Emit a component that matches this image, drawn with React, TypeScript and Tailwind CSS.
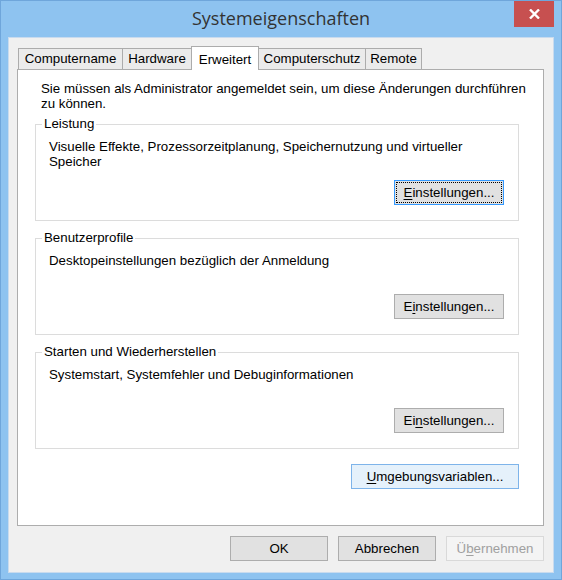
import type { ReactNode } from "react";

type ButtonKind = "normal" | "default" | "hot" | "disabled";

const buttonKinds: Record<ButtonKind, string> = {
  normal: "border-[#adadad] bg-[#e1e1e1] text-black",
  default:
    "border-[#3399ff] bg-[#e1e1e1] text-black outline-1 outline-dotted outline-black outline-offset-[-3px]",
  hot: "border-[#7eb4ea] bg-[#e5f1fb] text-black",
  disabled: "border-[#d9d9d9] bg-[#f4f4f4] text-[#a0a0a0]",
};

function WinButton({
  kind = "normal",
  className = "",
  children,
}: {
  kind?: ButtonKind;
  className?: string;
  children: ReactNode;
}) {
  return (
    <button
      type="button"
      disabled={kind === "disabled"}
      className={`flex h-[25px] shrink-0 items-center justify-center border leading-[15px] ${buttonKinds[kind]} ${className}`}
    >
      {children}
    </button>
  );
}

// access key, underlined like in the Windows dialog
const Key = ({ children }: { children: ReactNode }) => <span className="underline underline-offset-[2px]">{children}</span>;

function Tab({ label, active = false, className = "" }: { label: string; active?: boolean; className?: string }) {
  if (active) {
    return (
      <div
        className={`relative z-10 -mb-px -ml-px flex h-[24px] items-start justify-center border-x border-t border-[#acacac] bg-white pt-[3px] ${className}`}
      >
        {label}
      </div>
    );
  }
  return (
    <div
      className={`-ml-px flex h-[21px] items-center justify-center border-x border-t border-[#acacac] bg-[#ebebeb] first:ml-0 ${className}`}
    >
      {label}
    </div>
  );
}

function GroupBox({
  title,
  text,
  button,
  className = "",
}: {
  title: string;
  text: ReactNode;
  button: ReactNode;
  className?: string;
}) {
  return (
    <fieldset className={`border border-[#dcdcdc] ${className}`}>
      <legend className="ml-[6px] px-[2px] pb-[2px] leading-[15px]">{title}</legend>
      <div className="flex flex-col pl-[13px] pr-[14px] pt-[6px] pb-[15px]">
        <p className="h-[41px] leading-[15px]">{text}</p>
        <div className="flex justify-end">{button}</div>
      </div>
    </fieldset>
  );
}

export default function App() {
  return (
    <div className="flex h-[580px] w-[562px] flex-col border border-[#6fa6db] bg-[#8ec3f0] font-['Liberation_Sans',Arial,sans-serif] text-[13.3px] text-black">
      {/* title bar */}
      <div className="grid h-[36px] shrink-0 grid-cols-[1fr_auto_1fr]">
        <div />
        <div className="pt-[5px] font-['Open_Sans',sans-serif] text-[18px] leading-[24px] text-[#333333]">
          Systemeigenschaften
        </div>
        <div className="flex justify-end pr-[7px]">
          <div className="flex h-[26px] w-[40px] items-center justify-center bg-[#c75050]">
            <svg width="11" height="10" viewBox="0 0 11 10">
              <path d="M1 0.5 L10 9.5 M10 0.5 L1 9.5" stroke="#ffffff" strokeWidth="2.4" />
            </svg>
          </div>
        </div>
      </div>

      {/* client area */}
      <div className="mx-[7px] mb-[6px] flex flex-1 flex-col border border-[#c9dbee] bg-[#f0f0f0] pl-[8px] pr-[9px] pt-[8px]">
        <div className="flex h-[23px] items-end pl-[1px]">
          <Tab label="Computername" className="w-[105px]" />
          <Tab label="Hardware" className="w-[70px]" />
          <Tab label="Erweitert" active className="w-[68px]" />
          <Tab label="Computerschutz" className="w-[108px]" />
          <Tab label="Remote" className="w-[57px]" />
        </div>

        <div className="flex h-[457px] flex-col border border-[#adadad] bg-white pl-[17px] pr-[24px] pt-[11px]">
          <p className="whitespace-nowrap pl-[6px] leading-[15px]">
            Sie müssen als Administrator angemeldet sein, um diese Änderungen durchführen
            <br />
            zu können.
          </p>

          <GroupBox
            className="mt-[5px]"
            title="Leistung"
            text={
              <>
                Visuelle Effekte, Prozessorzeitplanung, Speichernutzung und virtueller
                <br />
                Speicher
              </>
            }
            button={
              <WinButton kind="default" className="w-[110px]">
                <Key>E</Key>instellungen...
              </WinButton>
            }
          />

          <GroupBox
            className="mt-[9px]"
            title="Benutzerprofile"
            text="Desktopeinstellungen bezüglich der Anmeldung"
            button={
              <WinButton className="w-[110px]">
                E<Key>i</Key>nstellungen...
              </WinButton>
            }
          />

          <GroupBox
            className="mt-[9px]"
            title="Starten und Wiederherstellen"
            text="Systemstart, Systemfehler und Debuginformationen"
            button={
              <WinButton className="w-[110px]">
                Ei<Key>n</Key>stellungen...
              </WinButton>
            }
          />

          <div className="mt-[15px] flex justify-end">
            <WinButton kind="hot" className="w-[168px]">
              <Key>U</Key>mgebungsvariablen...
            </WinButton>
          </div>
        </div>

        <div className="mt-[10px] flex justify-end gap-[10px]">
          <WinButton className="w-[98px]">OK</WinButton>
          <WinButton className="w-[98px]">Abbrechen</WinButton>
          <WinButton kind="disabled" className="w-[98px]">
            Ü<Key>b</Key>ernehmen
          </WinButton>
        </div>
      </div>
    </div>
  );
}
